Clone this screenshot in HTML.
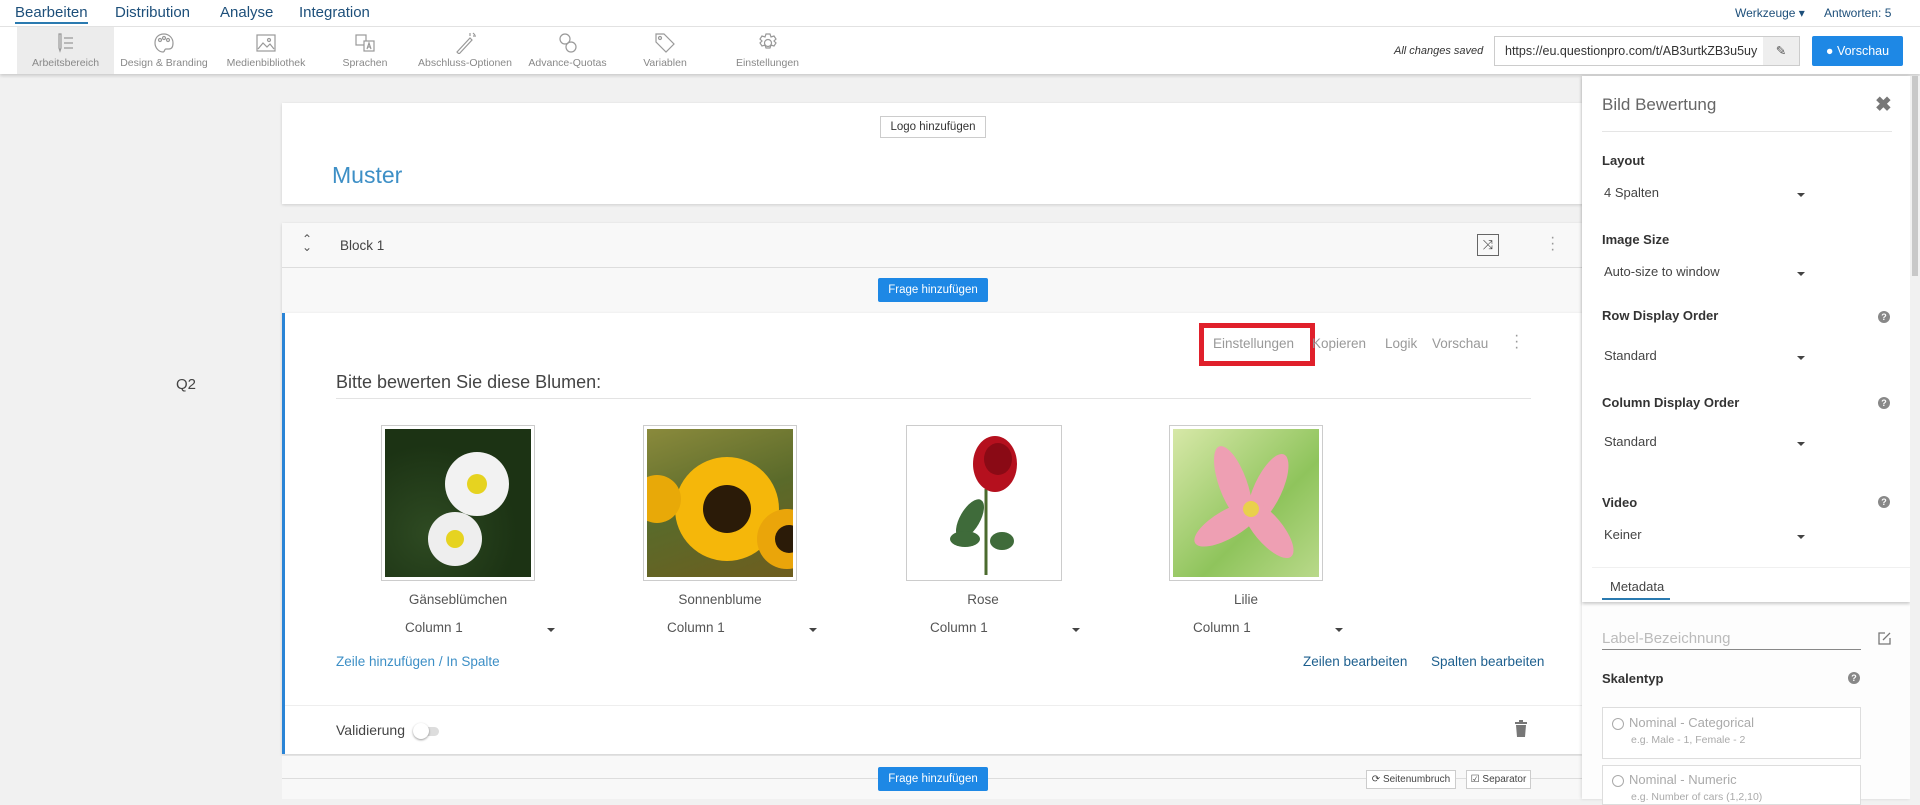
<!DOCTYPE html>
<html><head><meta charset="utf-8"><style>
*{box-sizing:border-box;margin:0;padding:0}
body{width:1920px;height:799px;overflow:hidden;background:#f1f1f1;font-family:"Liberation Sans",sans-serif;color:#444;position:relative}
.abs{position:absolute}
.nav{left:0;top:0;width:1920px;height:27px;background:#fff;border-bottom:1px solid #e3e3e3}
.nav span{position:absolute;top:4px;font-size:15px;color:#1d4f7a}
.tb{left:0;top:27px;width:1920px;height:47px;background:#fff;box-shadow:0 2px 3px rgba(0,0,0,.15)}
.ti{position:absolute;top:0;height:47px;text-align:center;font-size:10.5px;color:#888}
.ti svg{display:block;margin:5px auto 3px}
.card{background:#fff;box-shadow:0 1px 3px rgba(0,0,0,.15)}
.btn{background:#1e88e5;color:#fff;font-size:11.5px;text-align:center;line-height:24px;border-radius:2px}
.lab{font-size:13px;font-weight:bold;color:#333}
.val{font-size:13px;color:#444}
.car{width:0;height:0;border-left:4px solid transparent;border-right:4px solid transparent;border-top:4px solid #444}
.help{width:12px;height:12px;border-radius:50%;background:#888;color:#fff;font-size:9px;font-weight:bold;text-align:center;line-height:12px}
.img{border:1px solid #ccc;padding:3px;background:#fff}
.img>div{width:100%;height:100%;overflow:hidden;position:relative}
.fl{font-size:13.5px;color:#555;text-align:center;width:154px}
.sel{font-size:13.5px;color:#555}
</style></head><body>

<div class="abs nav">
<span style="left:15px;border-bottom:2px solid #2a7ab0;padding-bottom:1px">Bearbeiten</span>
<span style="left:115px">Distribution</span>
<span style="left:220px">Analyse</span>
<span style="left:299px">Integration</span>
<span style="left:1735px;font-size:12px;top:6px">Werkzeuge ▾</span>
<span style="left:1824px;font-size:12px;top:6px">Antworten: 5</span>
</div>

<div class="abs tb">
<div class="ti" style="left:17px;width:97px;background:#ececec">
<svg width="22" height="22" viewBox="0 0 22 22" fill="none" stroke="#999" stroke-width="1.2"><path d="M4 2v14l1 3 1-3V2zM9 6h9M9 11h9M9 16h9"/></svg>Arbeitsbereich</div>
<div class="ti" style="left:119px;width:90px"><svg width="22" height="22" viewBox="0 0 22 22" fill="none" stroke="#999" stroke-width="1.2"><path d="M11 2C5 2 2 6 2 11s4 9 8 9c2 0 1-3 3-3h3c3 0 4-3 4-6 0-5-4-9-9-9z"/><circle cx="7" cy="8" r="1.5"/><circle cx="11" cy="6" r="1.5"/><circle cx="15" cy="8" r="1.5"/></svg>Design &amp; Branding</div>
<div class="ti" style="left:222px;width:88px"><svg width="22" height="22" viewBox="0 0 22 22" fill="none" stroke="#999" stroke-width="1.2"><rect x="2" y="3" width="18" height="16"/><path d="M3 17l5-6 4 4 3-3 4 5"/><circle cx="14" cy="8" r="1.5"/></svg>Medienbibliothek</div>
<div class="ti" style="left:335px;width:60px"><svg width="22" height="22" viewBox="0 0 22 22" fill="none" stroke="#999" stroke-width="1.2"><rect x="2" y="3" width="10" height="10"/><rect x="10" y="9" width="10" height="10" fill="#fff"/><path d="M13 17l2-6 2 6M14 15h2"/></svg>Sprachen</div>
<div class="ti" style="left:415px;width:100px"><svg width="22" height="22" viewBox="0 0 22 22" fill="none" stroke="#999" stroke-width="1.2"><path d="M3 20L16 6l2 2L5 22zM16 1v3M19 4h3M19 1l2 2"/></svg>Abschluss-Optionen</div>
<div class="ti" style="left:525px;width:85px"><svg width="22" height="22" viewBox="0 0 22 22" fill="none" stroke="#999" stroke-width="1.2"><circle cx="8" cy="7" r="5"/><circle cx="14" cy="15" r="5"/></svg>Advance-Quotas</div>
<div class="ti" style="left:635px;width:60px"><svg width="22" height="22" viewBox="0 0 22 22" fill="none" stroke="#999" stroke-width="1.2"><path d="M2 2h8l10 10-8 8L2 10z"/><circle cx="6" cy="6" r="1.5"/></svg>Variablen</div>
<div class="ti" style="left:730px;width:75px"><svg width="22" height="22" viewBox="0 0 22 22" fill="none" stroke="#999" stroke-width="1.2"><circle cx="11" cy="11" r="3.5"/><path d="M9 2h4l1 3 3-1 2 3-2 2 2 2-2 3-3-1-1 3H9l-1-3-3 1-2-3 2-2-2-2 2-3 3 1z"/></svg>Einstellungen</div>
<div class="abs" style="left:1394px;top:18px;font-size:11px;font-style:italic;color:#333">All changes saved</div>
<div class="abs" style="left:1494px;top:9px;width:306px;height:30px;border:1px solid #ccc;background:#fff;font-size:12.5px;line-height:28px;padding-left:10px;color:#333;overflow:hidden">https://eu.questionpro.com/t/AB3urtkZB3u5uy<div class="abs" style="right:0;top:0;width:36px;height:28px;background:#eee;text-align:center;color:#555">✎</div></div>
<div class="abs btn" style="left:1812px;top:9px;width:91px;height:30px;line-height:30px;font-size:12.5px">● Vorschau</div>
</div>

<!-- header card -->
<div class="abs card" style="left:282px;top:103px;width:1300px;height:101px">
<div class="abs" style="left:598px;top:13px;width:106px;height:22px;border:1px solid #ccc;font-size:11.5px;text-align:center;line-height:20px;color:#333">Logo hinzufügen</div>
<div class="abs" style="left:50px;top:59px;font-size:23px;color:#3d8fc6">Muster</div>
</div>

<!-- block card -->
<div class="abs card" style="left:282px;top:223px;width:1300px;height:90px;background:#f8f8f8">
<div class="abs" style="left:0;top:0;width:1300px;height:45px;background:#f8f8f8;border-bottom:1px solid #ddd"></div>
<div class="abs" style="left:20px;top:12px;font-size:12px;color:#555;line-height:8px">⌃<br>⌄</div>
<div class="abs" style="left:58px;top:15px;font-size:13.5px;color:#444">Block 1</div>
<div class="abs" style="left:1195px;top:11px;width:22px;height:22px;border:1px solid #666;font-size:13px;text-align:center;line-height:20px">⤨</div>
<div class="abs" style="left:1268px;top:12px;font-size:16px;color:#999;line-height:6px">·<br>·<br>·</div>
<div class="abs btn" style="left:596px;top:55px;width:110px;height:24px">Frage hinzufügen</div>
</div>

<div class="abs" style="left:176px;top:376px;font-size:15px;color:#444">Q2</div>

<!-- question card -->
<div class="abs card" style="left:282px;top:313px;width:1300px;height:441px;border-left:3px solid #2a84d6">
<div class="abs" style="left:914px;top:10px;width:116px;height:43px;border:5px solid #e0202b"></div>
<div class="abs" style="left:928px;top:23px;font-size:13.5px;color:#999">Einstellungen</div>
<div class="abs" style="left:1027px;top:23px;font-size:13.5px;color:#999">Kopieren</div>
<div class="abs" style="left:1100px;top:23px;font-size:13.5px;color:#999">Logik</div>
<div class="abs" style="left:1147px;top:23px;font-size:13.5px;color:#999">Vorschau</div>
<div class="abs" style="left:1229px;top:20px;font-size:16px;color:#999;line-height:6px">·<br>·<br>·</div>
<div class="abs" style="left:51px;top:59px;font-size:18px;color:#444">Bitte bewerten Sie diese Blumen:</div>
<div class="abs" style="left:51px;top:85px;width:1195px;height:1px;background:#e3e3e3"></div>

<div class="abs img" style="left:96px;top:112px;width:154px;height:156px"><div style="background:radial-gradient(circle at 30% 70%,#2e4a22,#1c3314 60%),#24391a">
<svg width="146" height="148" viewBox="0 0 146 148"><g fill="#fff"><circle cx="92" cy="55" r="32" fill="#f2f2f2"/><circle cx="70" cy="110" r="27" fill="#eee"/></g><circle cx="92" cy="55" r="10" fill="#e6d320"/><circle cx="70" cy="110" r="9" fill="#e6d320"/></svg></div></div>

<div class="abs img" style="left:358px;top:112px;width:154px;height:156px"><div style="background:linear-gradient(160deg,#8a8a3c,#5a6a2a 50%,#6e5d1e)">
<svg width="146" height="148" viewBox="0 0 146 148"><circle cx="80" cy="80" r="52" fill="#f5b70a"/><circle cx="80" cy="80" r="24" fill="#2b1b08"/><circle cx="140" cy="110" r="30" fill="#eaa50a"/><circle cx="142" cy="110" r="14" fill="#2b1b08"/><circle cx="10" cy="70" r="24" fill="#e8a908"/></svg></div></div>

<div class="abs img" style="left:621px;top:112px;width:156px;height:156px"><div style="background:#fff">
<svg width="148" height="148" viewBox="0 0 148 148"><path d="M76 60v86" stroke="#4b6b2e" stroke-width="3"/><ellipse cx="60" cy="90" rx="10" ry="22" transform="rotate(30 60 90)" fill="#3f6b3a"/><ellipse cx="55" cy="110" rx="15" ry="8" fill="#3f6b3a"/><ellipse cx="92" cy="112" rx="12" ry="9" fill="#3f6b3a"/><ellipse cx="85" cy="35" rx="22" ry="28" fill="#b5101e"/><ellipse cx="88" cy="30" rx="14" ry="16" fill="#8a0a15"/></svg></div></div>

<div class="abs img" style="left:884px;top:112px;width:154px;height:156px"><div style="background:linear-gradient(135deg,#d7e8a8,#8fc45c 60%,#b9d98a)">
<svg width="146" height="148" viewBox="0 0 146 148"><g fill="#ee9fb3"><ellipse cx="60" cy="55" rx="14" ry="40" transform="rotate(-20 60 55)"/><ellipse cx="95" cy="60" rx="14" ry="38" transform="rotate(25 95 60)"/><ellipse cx="55" cy="95" rx="14" ry="38" transform="rotate(60 55 95)"/><ellipse cx="95" cy="100" rx="14" ry="36" transform="rotate(-40 95 100)"/></g><circle cx="78" cy="80" r="8" fill="#e9d04c"/></svg></div></div>

<div class="abs fl" style="left:96px;top:279px">Gänseblümchen</div>
<div class="abs fl" style="left:358px;top:279px">Sonnenblume</div>
<div class="abs fl" style="left:621px;top:279px">Rose</div>
<div class="abs fl" style="left:884px;top:279px">Lilie</div>

<div class="abs sel" style="left:120px;top:307px">Column 1</div><div class="abs car" style="left:262px;top:315px"></div>
<div class="abs sel" style="left:382px;top:307px">Column 1</div><div class="abs car" style="left:524px;top:315px"></div>
<div class="abs sel" style="left:645px;top:307px">Column 1</div><div class="abs car" style="left:787px;top:315px"></div>
<div class="abs sel" style="left:908px;top:307px">Column 1</div><div class="abs car" style="left:1050px;top:315px"></div>

<div class="abs" style="left:51px;top:341px;font-size:13.5px;color:#3d8fc6">Zeile hinzufügen / In Spalte</div>
<div class="abs" style="left:1018px;top:341px;font-size:13.5px;color:#1d5f8e">Zeilen bearbeiten</div>
<div class="abs" style="left:1146px;top:341px;font-size:13.5px;color:#1d5f8e">Spalten bearbeiten</div>

<div class="abs" style="left:0;top:392px;width:1297px;height:1px;background:#eee"></div>
<div class="abs" style="left:51px;top:409px;font-size:14px;color:#444">Validierung</div>
<div class="abs" style="left:130px;top:414px;width:24px;height:9px;border-radius:5px;background:#ddd"></div>
<div class="abs" style="left:128px;top:410px;width:16px;height:16px;border-radius:50%;background:#fff;box-shadow:0 1px 2px rgba(0,0,0,.4)"></div>
<svg class="abs" style="left:1229px;top:407px" width="14" height="17" viewBox="0 0 14 17"><path d="M1 3h12M5 1h4" stroke="#777" stroke-width="2"/><path d="M2 5h10l-1 12H3z" fill="#777"/></svg>
</div>

<!-- bottom -->
<div class="abs" style="left:282px;top:756px;width:1300px;height:43px;background:#f8f8f8"></div>
<div class="abs" style="left:282px;top:778px;width:1300px;height:1px;background:#ddd"></div>
<div class="abs btn" style="left:878px;top:767px;width:110px;height:24px">Frage hinzufügen</div>
<div class="abs" style="left:1366px;top:770px;width:90px;height:19px;border:1px solid #ccc;background:#fff;font-size:10px;line-height:17px;text-align:center">⟳ Seitenumbruch</div>
<div class="abs" style="left:1466px;top:770px;width:65px;height:19px;border:1px solid #ccc;background:#fff;font-size:10px;line-height:17px;text-align:center">☑ Separator</div>

<!-- right panel -->
<div class="abs" style="left:1582px;top:76px;width:328px;height:723px;background:#fdfdfd;box-shadow:-1px 0 3px rgba(0,0,0,.12)"></div>
<div class="abs" style="left:1582px;top:76px;width:328px;height:526px;background:#fff;box-shadow:0 2px 3px rgba(0,0,0,.2)"></div>
<div class="abs" style="left:1910px;top:76px;width:10px;height:723px;background:#f1f1f1"></div>
<div class="abs" style="left:1912px;top:76px;width:6px;height:200px;background:#c8c8c8"></div>
<div class="abs" style="left:1602px;top:95px;font-size:17px;color:#666">Bild Bewertung</div>
<div class="abs" style="left:1875px;top:92px;font-size:20px;color:#777;font-weight:bold">✖</div>
<div class="abs" style="left:1602px;top:131px;width:290px;height:1px;background:#e5e5e5"></div>

<div class="abs lab" style="left:1602px;top:153px">Layout</div>
<div class="abs val" style="left:1604px;top:185px">4 Spalten</div><div class="abs car" style="left:1797px;top:193px"></div>
<div class="abs lab" style="left:1602px;top:232px">Image Size</div>
<div class="abs val" style="left:1604px;top:264px">Auto-size to window</div><div class="abs car" style="left:1797px;top:272px"></div>
<div class="abs lab" style="left:1602px;top:308px">Row Display Order</div><div class="abs help" style="left:1878px;top:311px">?</div>
<div class="abs val" style="left:1604px;top:348px">Standard</div><div class="abs car" style="left:1797px;top:356px"></div>
<div class="abs lab" style="left:1602px;top:395px">Column Display Order</div><div class="abs help" style="left:1878px;top:397px">?</div>
<div class="abs val" style="left:1604px;top:434px">Standard</div><div class="abs car" style="left:1797px;top:442px"></div>
<div class="abs lab" style="left:1602px;top:495px">Video</div><div class="abs help" style="left:1878px;top:496px">?</div>
<div class="abs val" style="left:1604px;top:527px">Keiner</div><div class="abs car" style="left:1797px;top:535px"></div>
<div class="abs" style="left:1592px;top:567px;width:318px;height:1px;background:#f0f0f0"></div>
<div class="abs val" style="left:1610px;top:579px">Metadata</div>
<div class="abs" style="left:1602px;top:598px;width:68px;height:2px;background:#2a7ab0"></div>

<div class="abs" style="left:1602px;top:630px;font-size:15px;color:#bbb">Label-Bezeichnung</div>
<div class="abs" style="left:1602px;top:649px;width:259px;height:1px;background:#888"></div>
<svg class="abs" style="left:1878px;top:632px" width="13" height="13" viewBox="0 0 13 13" fill="none" stroke="#777" stroke-width="1.3"><path d="M7 1H1v11h11V6M5 8l7-7"/></svg>
<div class="abs lab" style="left:1602px;top:671px">Skalentyp</div><div class="abs help" style="left:1848px;top:672px">?</div>
<div class="abs" style="left:1602px;top:707px;width:259px;height:52px;border:1px solid #ddd;background:#fff"></div>
<div class="abs" style="left:1612px;top:718px;width:12px;height:12px;border:1.5px solid #aaa;border-radius:50%"></div>
<div class="abs" style="left:1629px;top:715px;font-size:13px;color:#aaa">Nominal - Categorical</div>
<div class="abs" style="left:1631px;top:734px;font-size:10.5px;color:#aaa">e.g. Male - 1, Female - 2</div>
<div class="abs" style="left:1602px;top:765px;width:259px;height:40px;border:1px solid #ddd;background:#fff"></div>
<div class="abs" style="left:1612px;top:775px;width:12px;height:12px;border:1.5px solid #aaa;border-radius:50%"></div>
<div class="abs" style="left:1629px;top:772px;font-size:13px;color:#aaa">Nominal - Numeric</div>
<div class="abs" style="left:1631px;top:791px;font-size:10.5px;color:#aaa">e.g. Number of cars (1,2,10)</div>
</body></html>
